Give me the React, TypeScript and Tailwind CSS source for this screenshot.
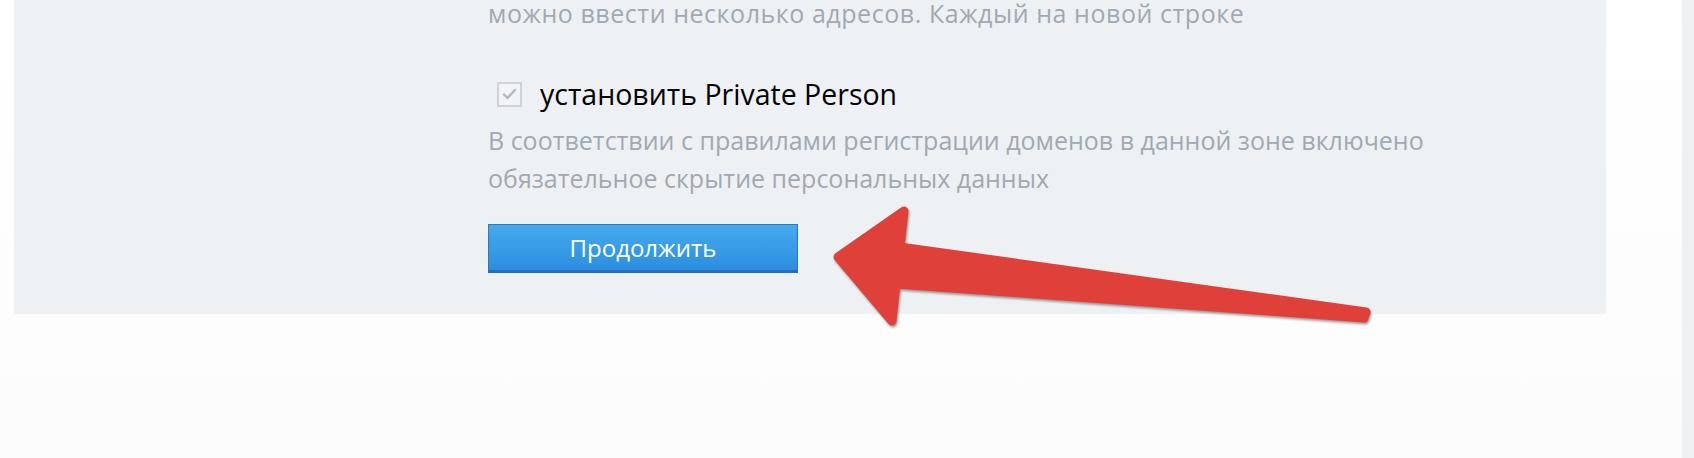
import React from 'react';

const Arrow: React.FC = () => (
  <svg
    className="pointer-events-none absolute left-0 top-0"
    width={1694}
    height={458}
    viewBox="0 0 1694 458"
    style={{ filter: 'drop-shadow(1px 2px 1px rgba(60,40,40,0.45))' }}
  >
    <polygon
      points="838,257 904,211 900,247 1366,312 1364,318 896,284 892,321"
      fill="#e0403a"
      stroke="#e0403a"
      strokeWidth={9}
      strokeLinejoin="round"
    />
  </svg>
);

const App: React.FC = () => {
  return (
    <div className="relative h-[458px] w-[1694px] overflow-hidden bg-gradient-to-b from-white to-[#fcfcfc] font-['Open_Sans',sans-serif]">
      <div className="flex h-full">
        <div className="flex-1 pl-[14px] pr-[76px]">
          <div className="flex h-[314px] flex-col items-start bg-[#eef1f4] pl-[474px]">
            <p className="-mt-[6px] whitespace-nowrap text-[25px] leading-[38px] tracking-[0.55px] text-[#a1a9b1]">
              можно ввести несколько адресов. Каждый на новой строке
            </p>

            <label className="mt-[43px] flex h-[38px] items-center gap-[18px] pl-[9px]">
              <span className="flex h-[25px] w-[25px] items-center justify-center border-2 border-[#cfd3d7] bg-[#f1f3f5]">
                <svg width="15" height="12" viewBox="0 0 14 12" fill="none">
                  <path d="M1.5 6.5l3.5 3.5 7.5-8" stroke="#b3b8bd" strokeWidth={2.4} strokeLinecap="round" strokeLinejoin="round" />
                </svg>
              </span>
              <span className="text-[28.5px] text-black">установить Private Person</span>
            </label>

            <p className="mt-[8px] whitespace-nowrap text-[25px] leading-[38px] text-[#a1a9b1]">
              В соответствии с правилами регистрации доменов в данной зоне включено
              <br />
              обязательное скрытие персональных данных
            </p>

            <button className="mt-[27px] flex h-[49px] w-[310px] items-center justify-center border border-[#2f77b4] border-b-[3px] border-b-[#1f6fc9] bg-gradient-to-b from-[#44aaed] to-[#2c8ee0] text-[24px] text-white">
              Продолжить
            </button>
          </div>
        </div>
        <div className="w-[12px] bg-[#eef0f2]" />
      </div>
      <Arrow />
    </div>
  );
};

export default App;
